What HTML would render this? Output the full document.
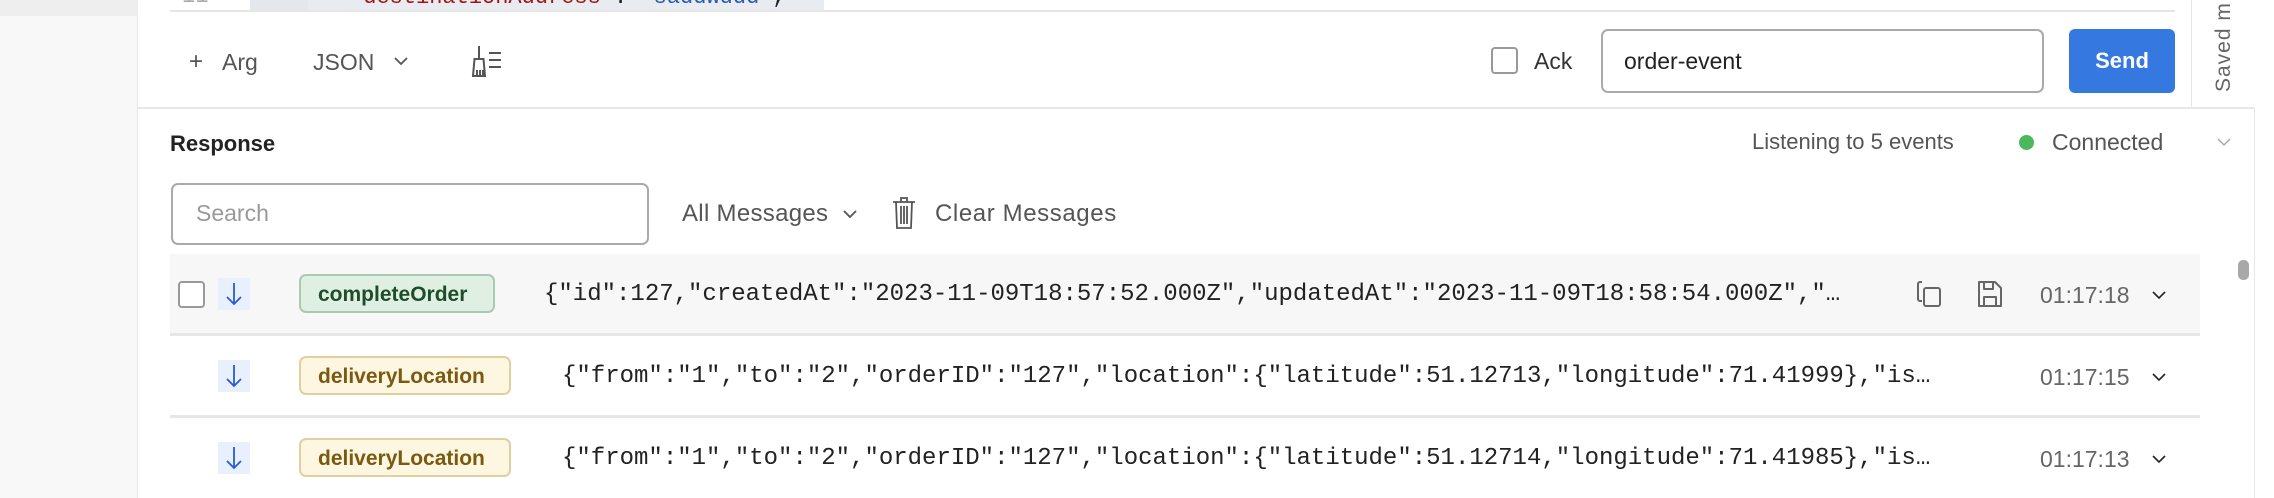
<!DOCTYPE html>
<html><head><meta charset="utf-8"><style>
*{margin:0;padding:0;box-sizing:border-box}
body{width:2274px;height:498px;overflow:hidden;background:#fff;font-family:"Liberation Sans",Arial,sans-serif;position:relative;color:#333}
.a{position:absolute}
.t{font-size:22px;color:#555;white-space:nowrap;line-height:1}
.mono{font-family:"Liberation Mono",monospace;font-size:24px;color:#222;white-space:nowrap;line-height:1}
.row{position:absolute;left:170px;width:2030px;border-bottom:3px solid #e6e6e6}
.badge{position:absolute;left:299px;height:39px;border-radius:7px;font-size:21px;font-weight:bold;line-height:37px;padding-left:17px}
.arr{position:absolute;left:218px;width:32px;height:32px;background:#e8f0fe}
</style></head><body>
<div class="a" style="left:0;top:0;width:138px;height:498px;background:#f8f8f8;border-right:1px solid #e6e6e6"></div>
<div class="a" style="left:0;top:0;width:138px;height:16px;background:#eeeeee"></div>
<!-- code strip -->
<div class="a" style="left:250px;top:0;width:58px;height:10px;background:#e4e8ec"></div>
<div class="a" style="left:308px;top:0;width:516px;height:10px;background:#e8ecf0"></div>
<div class="a mono" style="left:182px;top:-14px;color:#aaa;font-size:22px">11</div>
<div class="a mono" style="left:350px;top:-13px;font-size:22px"><span style="color:#a31515">"destinationAddress"</span>: <span style="color:#2a5bb0">"saddwddd"</span>,</div>
<div class="a" style="left:170px;top:10px;width:2005px;height:2px;background:#e6e6e6"></div>
<!-- right saved panel -->
<div class="a" style="left:2191px;top:0;width:1px;height:108px;background:#e6e6e6"></div>
<div class="a" style="left:2212px;top:92px;transform:rotate(-90deg);transform-origin:0 0;font-size:21px;color:#666;white-space:nowrap;letter-spacing:1px">Saved m</div>
<!-- toolbar -->
<div class="a t" style="left:189px;top:50px;font-size:24px">+</div>
<div class="a t" style="left:222px;top:51px;font-size:23px">Arg</div>
<div class="a t" style="left:313px;top:51px;font-size:23px">JSON</div>
<svg class="a" style="left:393px;top:55px" width="16" height="12" viewBox="0 0 16 12"><path d="M2 3l6 6 6-6" fill="none" stroke="#555" stroke-width="1.8"/></svg>
<svg class="a" style="left:470px;top:45px" width="34" height="34" viewBox="0 0 34 34"><path d="M9 1v12M3 31l1.5-17h9l1.5 17zM7 31v-6M10 31v-6M13 31v-6M19 8h12M19 15h12M19 22h12" fill="none" stroke="#555" stroke-width="2"/></svg>
<div class="a" style="left:1491px;top:47px;width:27px;height:27px;border:2px solid #999;border-radius:4px"></div>
<div class="a t" style="left:1534px;top:50px;color:#333;font-size:23px">Ack</div>
<div class="a" style="left:1601px;top:29px;width:443px;height:64px;border:2px solid #aaa;border-radius:7px"></div>
<div class="a t" style="left:1624px;top:50px;color:#222;font-size:23px">order-event</div>
<div class="a" style="left:2069px;top:29px;width:106px;height:64px;background:#3579e0;border-radius:6px;color:#fff;font-size:22px;font-weight:bold;text-align:center;line-height:64px">Send</div>
<div class="a" style="left:138px;top:107px;width:2116px;height:2px;background:#e8e8e8"></div>
<div class="a" style="left:2254px;top:108px;width:1px;height:390px;background:#e6e6e6"></div>
<!-- response header -->
<div class="a" style="left:170px;top:131px;font-size:22px;font-weight:bold;color:#222">Response</div>
<div class="a t" style="left:1752px;top:131px">Listening to 5 events</div>
<div class="a" style="left:2019px;top:135px;width:15px;height:15px;border-radius:50%;background:#4cb85c"></div>
<div class="a t" style="left:2052px;top:131px;font-size:23px">Connected</div>
<svg class="a" style="left:2216px;top:136px" width="16" height="12" viewBox="0 0 16 12"><path d="M2 3l6 6 6-6" fill="none" stroke="#aaa" stroke-width="1.5"/></svg>
<div class="a" style="left:171px;top:183px;width:478px;height:62px;border:2px solid #aaa;border-radius:7px"></div>
<div class="a t" style="left:196px;top:202px;color:#999;font-size:23px">Search</div>
<div class="a t" style="left:682px;top:202px;font-size:24px;letter-spacing:0.3px">All Messages</div>
<svg class="a" style="left:842px;top:208px" width="16" height="12" viewBox="0 0 16 12"><path d="M2 3l6 6 6-6" fill="none" stroke="#555" stroke-width="1.8"/></svg>
<svg class="a" style="left:892px;top:196px" width="24" height="34" viewBox="0 0 24 34"><path d="M1 6h22M9 6V2h6v4M4 6l1 26h14l1-26M9 10v18M12 10v18M15 10v18" fill="none" stroke="#555" stroke-width="1.8"/></svg>
<div class="a t" style="left:935px;top:202px;font-size:24px;letter-spacing:0.6px">Clear Messages</div>
<!-- rows -->
<div class="row" style="top:254px;height:82px;background:#f7f7f7"></div>
<div class="row" style="top:336px;height:82px"></div>
<div class="a" style="left:178px;top:281px;width:27px;height:27px;border:2px solid #999;border-radius:4px;background:#fff"></div>
<div class="arr" style="top:278px"></div><div class="arr" style="top:360px"></div><div class="arr" style="top:442px"></div>
<svg class="a" style="left:218px;top:278px" width="32" height="32" viewBox="0 0 32 32"><path d="M16 5v21M9 19l7 7 7-7" fill="none" stroke="#2a5bd7" stroke-width="1.8"/></svg>
<svg class="a" style="left:218px;top:360px" width="32" height="32" viewBox="0 0 32 32"><path d="M16 5v21M9 19l7 7 7-7" fill="none" stroke="#2a5bd7" stroke-width="1.8"/></svg>
<svg class="a" style="left:218px;top:442px" width="32" height="32" viewBox="0 0 32 32"><path d="M16 5v21M9 19l7 7 7-7" fill="none" stroke="#2a5bd7" stroke-width="1.8"/></svg>
<div class="badge" style="top:274px;width:196px;background:#dff0e3;border:2px solid #a9c9b0;color:#1e4d2b">completeOrder</div>
<div class="badge" style="top:356px;width:212px;background:#fdf6e1;border:2px solid #e0cf9f;color:#7a5a10">deliveryLocation</div>
<div class="badge" style="top:438px;width:212px;background:#fdf6e1;border:2px solid #e0cf9f;color:#7a5a10">deliveryLocation</div>
<div class="a mono" style="left:544px;top:283px">{"id":127,"createdAt":"2023-11-09T18:57:52.000Z","updatedAt":"2023-11-09T18:58:54.000Z","…</div>
<div class="a mono" style="left:562px;top:365px">{"from":"1","to":"2","orderID":"127","location":{"latitude":51.12713,"longitude":71.41999},"is…</div>
<div class="a mono" style="left:562px;top:447px">{"from":"1","to":"2","orderID":"127","location":{"latitude":51.12714,"longitude":71.41985},"is…</div>
<svg class="a" style="left:1912px;top:279px" width="34" height="30" viewBox="0 0 34 30"><path d="M10 22H8a2 2 0 0 1-2-2V5a2 2 0 0 1 2-2h2" fill="none" stroke="#666" stroke-width="2"/><rect x="12" y="9" width="16" height="18" rx="2" fill="none" stroke="#666" stroke-width="2"/></svg>
<svg class="a" style="left:1976px;top:279px" width="28" height="30" viewBox="0 0 28 30"><path d="M3 3h16l6 6v18H3zM8 3v7h9V3M8 27v-9h12v9" fill="none" stroke="#666" stroke-width="2" stroke-linejoin="round"/></svg>
<div class="a t" style="left:2040px;top:284px;color:#666;font-size:23px">01:17:18</div>
<div class="a t" style="left:2040px;top:366px;color:#666;font-size:23px">01:17:15</div>
<div class="a t" style="left:2040px;top:448px;color:#666;font-size:23px">01:17:13</div>
<svg class="a" style="left:2150px;top:288px" width="18" height="14" viewBox="0 0 18 14"><path d="M3 4l6 6 6-6" fill="none" stroke="#222" stroke-width="1.6"/></svg>
<svg class="a" style="left:2150px;top:370px" width="18" height="14" viewBox="0 0 18 14"><path d="M3 4l6 6 6-6" fill="none" stroke="#222" stroke-width="1.6"/></svg>
<svg class="a" style="left:2150px;top:452px" width="18" height="14" viewBox="0 0 18 14"><path d="M3 4l6 6 6-6" fill="none" stroke="#222" stroke-width="1.6"/></svg>
<div class="a" style="left:2238px;top:260px;width:11px;height:20px;border-radius:5px;background:#a8a8a8"></div>
</body></html>
